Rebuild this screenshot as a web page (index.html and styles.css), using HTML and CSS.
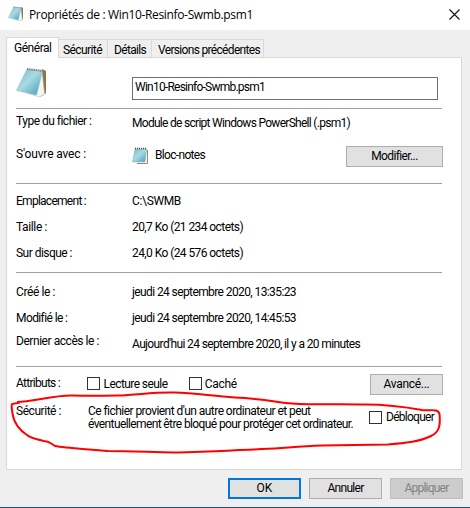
FILE: index.html
```html
<!DOCTYPE html>
<html lang="fr">
<head>
<meta charset="utf-8">
<title>Propriétés</title>
<link rel="stylesheet" href="styles.css">
</head>
<body>
<svg class="defs" aria-hidden="true">
  <defs>
    <linearGradient id="cover" x1="0" y1="0" x2="1" y2="1"><stop offset="0" stop-color="#74b8c7"/><stop offset=".45" stop-color="#a9dae4"/><stop offset="1" stop-color="#3d9db4"/></linearGradient>
    <symbol id="notepad" viewBox="0 0 32 32">
      <path d="M26 2l4 2v22l-4 3z" fill="#8d7545"/>
      <path d="M10 26l14 4 4-2-1-5z" fill="#c7c7bd"/>
      <path d="M26 4l2.500 23-5 3-9-3z" fill="#f4f5f3" stroke="#b8c0c0" stroke-width=".6"/>
      <path d="M11 2L.5 23.500 20.500 28 26.500 4z" fill="url(#cover)" stroke="#8bb8c2" stroke-width=".5"/>
      <path d="M11 2l16 2" stroke="#7c8587" stroke-width="2" stroke-dasharray="1.400 .8"/>
    </symbol>
  </defs>
</svg>
<div class="window">
  <header class="titlebar">
    <svg class="title-icon"><use href="#notepad"/></svg>
    <h1><span data-w="223">Propriétés de : Win10-Resinfo-Swmb.psm1</span></h1>
    <svg class="close" viewBox="0 0 11 11"><path d="M.5.5l10 10M10.500.5l-10 10" stroke="#111" stroke-width="1.1"/></svg>
  </header>
  <nav class="tabs">
    <div class="tab active"><span data-w="36.500">Général</span></div>
    <div class="tab t2"><span data-w="38">Sécurité</span></div>
    <div class="tab t3"><span data-w="31">Détails</span></div>
    <div class="tab t4"><span data-w="101">Versions précédentes</span></div>
  </nav>
  <main class="panel">
    <section class="name">
      <svg class="file-icon"><use href="#notepad"/></svg>
      <div class="field"><span data-w="129">Win10-Resinfo-Swmb.psm1</span></div>
    </section>
    <section class="type">
      <div class="row r-type"><span data-w="74">Type du fichier :</span><span class="low2" data-w="217">Module de script Windows PowerShell (.psm1)</span></div>
      <div class="row r-open"><span data-w="69">S'ouvre avec :</span>
        <div class="app"><svg viewBox="0 0 17 17"><path d="M5 16.500h10.500V3" fill="none" stroke="#9b8967"/><path d="M3 2h12l-2 13H.5z" fill="url(#cover)" stroke="#8ab7c2" stroke-width=".6"/><path d="M3 1.500h12" stroke="#444" stroke-width="1.5" stroke-dasharray="1 1"/><path d="M13.500 15l1.500-12v12z" fill="#f5f5f5"/></svg><span data-w="49">Bloc-notes</span></div>
        <div class="button modify"><span data-w="45">Modifier...</span></div></div>
    </section>
    <section class="size">
      <div class="row"><span data-w="69">Emplacement :</span><span data-w="48">C:\SWMB</span></div>
      <div class="row"><span data-w="30">Taille :</span><span data-w="110">20,7 Ko (21 234 octets)</span></div>
      <div class="row"><span data-w="55">Sur disque :</span><span data-w="110">24,0 Ko (24 576 octets)</span></div>
    </section>
    <section class="dates">
      <div class="row"><span data-w="38">Créé le :</span><span data-w="163">jeudi 24 septembre 2020, 13:35:23</span></div>
      <div class="row"><span data-w="50">Modifié le :</span><span data-w="163">jeudi 24 septembre 2020, 14:45:53</span></div>
      <div class="row access"><span data-w="82">Dernier accès le :</span><span class="low3" data-w="227">Aujourd'hui 24 septembre 2020, il y a 20 minutes</span></div>
    </section>
    <section class="attributes">
      <div class="attr"><span data-w="43">Attributs :</span>
        <label class="check"><i></i><span data-w="63">Lecture seule</span></label>
        <label class="check"><i></i><span data-w="31">Caché</span></label>
        <div class="button advanced"><span data-w="45">Avancé...</span></div></div>
      <div class="security"><span data-w="44">Sécurité :</span>
        <div class="notice"><span data-w="221">Ce fichier provient d'un autre ordinateur et peut</span><span data-w="264">éventuellement être bloqué pour protéger cet ordinateur.</span></div>
        <label class="check unblock"><i></i><span data-w="47">Débloquer</span></label></div>
    </section>
  </main>
  <footer>
    <div class="button ok"><span data-w="15">OK</span></div>
    <div class="button"><span data-w="35">Annuler</span></div>
    <div class="button disabled"><span data-w="43">Appliquer</span></div>
  </footer>
  <svg class="annotation" viewBox="0 0 470 508"><path d="M17 402C32 402 54 395 72 395.500C88 396 98 396 117 395.500C139 395 151 392 174 392.500C196 393 211 396 235 397.500C269 399 272 402 292 403.500C318 405 334 404 360 404.500C386 404 406 407 422 410C430 411 438 408 439.500 414C440.500 424 440 432 431 436C419 442 405 443 388 444.500L322 445.500C290 447 274 449 239 450C211 452 192 452 174 452.500C149 452 129 451 108 451C87 449 65 448 55 446C50 443 49 441 44 441C35 439 30 438 27 435C19 430 14 422 13 416C12 410 11 407 12 404L20 402.500"/></svg>
</div>
<script src="fit.js"></script>
</body>
</html>
```
FILE: styles.css
```css
* { box-sizing: border-box; }
body { margin: 0; font: 12px/16px Roboto, "Liberation Sans", sans-serif; color: #000; }
span { white-space: nowrap; }
.defs { position: absolute; width: 0; height: 0; }
.window { position: relative; width: 470px; height: 508px; background: #efefef; border-bottom: 1px solid #17546f; display: flex; flex-direction: column; overflow: hidden; }
.titlebar { height: 30px; flex: none; background: #fff; display: flex; align-items: center; padding: 0 10px 2px 8px; }
.title-icon { width: 16px; height: 16px; margin-right: 5px; }
h1 { flex: 1; margin: 0; font: 12px/16px "Open Sans", sans-serif; padding-top: 1px; }
.close { width: 11px; height: 11px; }
.tabs { display: flex; align-items: flex-end; height: 28px; flex: none; padding-left: 6px; position: relative; z-index: 1; }
.tab { height: 19px; border: 1px solid #d9d9d9; border-left: 0; padding-top: 2px; line-height: 16px; }
.tab.active { width: 53px; height: 21px; border-left: 1px solid #d9d9d9; border-bottom: 0; background: #fff; padding: 2px 0 0 7px; }
.t2 { width: 49px; padding-left: 4px; }
.t3 { width: 44px; padding-left: 6px; }
.t4 { width: 112px; padding-left: 6px; }
.panel { width: 456px; height: 413px; flex: none; margin: -1px 0 0 6px; border: 1px solid #d9d9d9; background: #fff; padding: 0 19px 0 9px; }
section { border-bottom: 1px solid #a0a0a0; }
.name { height: 51px; display: flex; }
.file-icon { width: 32px; height: 32px; margin-top: 9px; }
.file-icon, .title-icon { overflow: visible; }
.field { width: 306px; height: 23px; margin: 19px 0 0 84px; border: 1px solid #6f6f6f; padding: 1px 0 0 2px; }
.type { height: 75px; padding-top: 4px; }
.row { display: grid; grid-template-columns: 116px 1fr auto; align-items: start; height: 26px; }
.r-type { height: 33px; }
.low2 { padding-top: 2px; }
.low3 { padding-top: 3px; }
.app { display: flex; padding-top: 1px; }
.app svg { width: 17px; height: 17px; margin-right: 6px; }
.button { height: 21px; width: 73px; border: 1px solid #adadad; background: #e1e1e1; text-align: center; line-height: 19px; }
.modify { width: 97px; margin-right: -1px; }
.size { height: 89px; padding-top: 9px; }
.dates { height: 94px; padding-top: 11px; }
.access { margin-top: -3px; }
.attributes { border: 0; padding-top: 7px; }
.attr { display: flex; height: 29px; }
.attr > span { width: 71px; padding-top: 1px; }
.attr .check { width: 102px; position: relative; left: 1px; }
.check { display: flex; }
.check i { width: 13px; height: 13px; border: 1px solid #333; background: #fff; margin: 3px 3px 0 0; flex: none; }
.check span { margin-top: 2px; }
.advanced { margin-left: 81px; flex: none; margin-right: -1px; }
.security { display: grid; grid-template-columns: 72px 281px 1fr; align-items: start; }
.notice { line-height: 13px; padding-top: 2px; }
.notice span { display: block; }
.unblock { padding-top: 5px; }
.unblock i { margin-right: 4px; }
.unblock span { margin-top: 1px; }
footer { display: flex; justify-content: flex-end; gap: 8px; padding: 8px 7px 0 0; }
.ok { border: 2px solid #0078d7; line-height: 17px; }
.disabled { background: #ccc; border-color: #bfbfbf; color: #838383; }
.annotation { position: absolute; inset: 0; width: 470px; height: 508px; fill: none; stroke: #f00; stroke-width: 2; z-index: 2; pointer-events: none; }
```
FILE: fit.js
```js
document.querySelectorAll('[data-w]').forEach(el => {
  const range = document.createRange();
  range.selectNodeContents(el);
  const natural = range.getBoundingClientRect().width;
  el.style.letterSpacing = ((Number(el.dataset.w) + 1 - natural) / el.textContent.length) + 'px';
});
```
